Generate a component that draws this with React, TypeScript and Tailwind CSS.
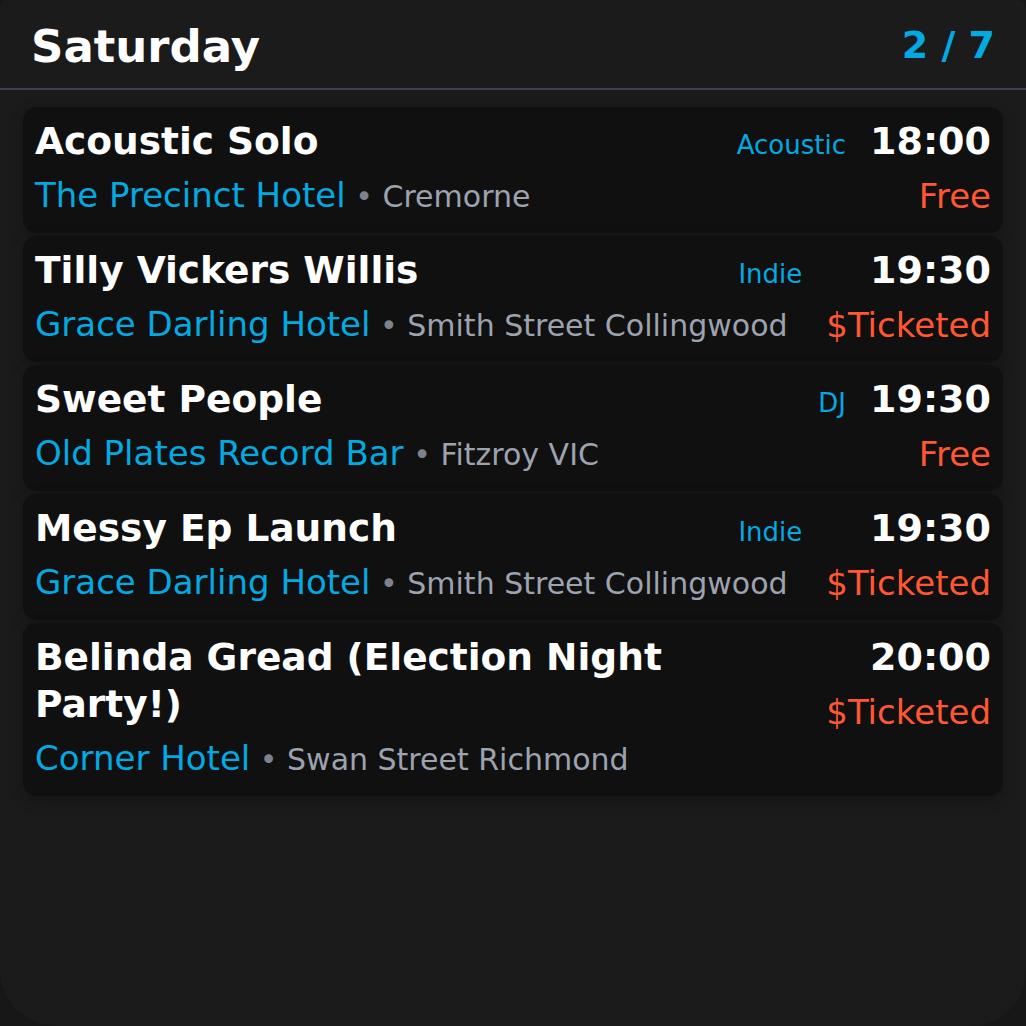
import React from "react";

type Gig = {
  title: string;
  venue: string;
  location: string;
  genre?: string;
  time: string;
  price: string;
};

const gigs: Gig[] = [
  { title: "Acoustic Solo", venue: "The Precinct Hotel", location: "Cremorne", genre: "Acoustic", time: "18:00", price: "Free" },
  { title: "Tilly Vickers Willis", venue: "Grace Darling Hotel", location: "Smith Street Collingwood", genre: "Indie", time: "19:30", price: "$Ticketed" },
  { title: "Sweet People", venue: "Old Plates Record Bar", location: "Fitzroy VIC", genre: "DJ", time: "19:30", price: "Free" },
  { title: "Messy Ep Launch", venue: "Grace Darling Hotel", location: "Smith Street Collingwood", genre: "Indie", time: "19:30", price: "$Ticketed" },
  { title: "Belinda Gread (Election Night Party!)", venue: "Corner Hotel", location: "Swan Street Richmond", time: "20:00", price: "$Ticketed" },
];

function GigCard({ g }: { g: Gig }) {
  return (
    <div className="flex items-start rounded-[14px] bg-[#101010] pl-[12px] pr-[12px] pt-[11px] pb-[15px] shadow-[0_4px_14px_rgba(0,0,0,0.25)]">
      <div className="min-w-0 flex-1">
        <div className="text-[37.5px] font-bold leading-[47px] text-white">{g.title}</div>
        <div className="mt-[9px] whitespace-nowrap text-[34px] leading-[43px]">
          <span className="text-[#03a9e0]">{g.venue}</span>
          <span className="text-[30px] text-[#9ca3af]">
            {" "}
            <span className="text-[#7d828c]">•</span> {g.location}
          </span>
        </div>
      </div>
      <div className="ml-[24px] flex shrink-0 items-baseline gap-[24px]">
        {g.genre && (
          <span className="text-[26px] leading-[1.25] text-[#03a9e0]">{g.genre}</span>
        )}
        <div className="flex flex-col items-end">
          <div className="text-[38px] font-bold leading-[1.25] text-white">{g.time}</div>
          <div className="mt-[9px] text-[34px] leading-[1.25] text-[#ff5733]">{g.price}</div>
        </div>
      </div>
    </div>
  );
}

export default function App() {
  return (
    <div
      className="h-[1026px] w-[1026px] bg-[#171717]"
      style={{ fontFamily: '"DejaVu Sans", "Noto Sans", sans-serif' }}
    >
      <div className="h-full w-full overflow-hidden rounded-b-[56px] rounded-t-[8px] bg-[#1b1b1b]">
        <div className="flex h-[90px] items-start justify-between border-b-2 border-[#3a404c] pl-[31px] pr-[31px]">
          <div className="mt-[19px] text-[45px] font-bold leading-[1.25] text-white">Saturday</div>
          <div className="mt-[22px] text-[38px] font-bold leading-[1.25] text-[#03a9e0]">2 / 7</div>
        </div>
        <div className="flex flex-col gap-[3px] px-[23px] pt-[17px]">
          {gigs.map((g, i) => (
            <GigCard key={i} g={g} />
          ))}
        </div>
      </div>
    </div>
  );
}
